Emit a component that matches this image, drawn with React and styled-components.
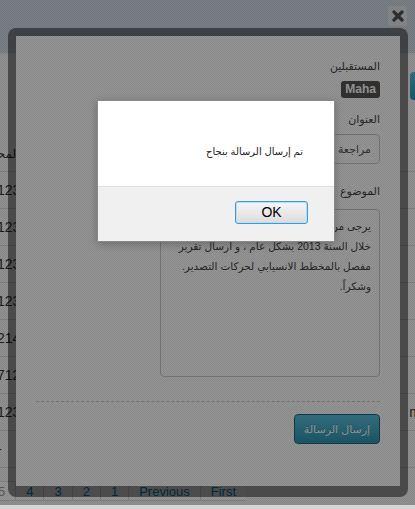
import React from 'react';
import styled, { createGlobalStyle } from 'styled-components';

const GlobalStyle = createGlobalStyle`
  html, body {
    margin: 0;
    padding: 0;
  }
  body {
    width: 415px;
    height: 509px;
    overflow: hidden;
    background: #d6d6d6;
    font-family: "Liberation Sans", "DejaVu Sans", sans-serif;
  }
`;

const Screen = styled.div`
  position: relative;
  width: 415px;
  height: 509px;
  overflow: hidden;
`;

/* ---------- page behind the dialogs ---------- */

const Page = styled.div`
  display: flex;
  flex-direction: column;
  height: 505px;
  background: #fafafa;
`;

const TopBar = styled.div`
  height: 53px;
  background: #d0dce6;
  border-bottom: 2px solid #eef2f5;
`;

const Toolbar = styled.div`
  display: flex;
  justify-content: flex-end;
  height: 66px;
  padding-top: 17px;
`;

const ToolButton = styled.div`
  width: 80px;
  height: 28px;
  margin-right: -75px;
  border-radius: 4px;
  background: linear-gradient(#5bc0de, #2f96b4);
`;

const Table = styled.div`
  display: flex;
  flex-direction: column;
`;

const Row = styled.div`
  display: flex;
  justify-content: space-between;
  align-items: ${(p) => (p.$head ? 'flex-end' : 'center')};
  height: ${(p) => (p.$head ? '34px' : '37px')};
  padding-bottom: ${(p) => (p.$head ? '10px' : '0')};
  box-sizing: border-box;
  border-bottom: 1px solid #dddddd;
  font-size: 14px;
  color: #333;
`;

const FirstCell = styled.span`
  margin-left: ${(p) => (p.$head ? '-24px' : '-3px')};
  direction: ${(p) => (p.$head ? 'rtl' : 'ltr')};
  font-size: ${(p) => (p.$head ? '12px' : '14px')};
`;

const LastCell = styled.span`
  margin-right: -6px;
`;

const Pagination = styled.div`
  display: flex;
  margin-top: 13px;
  margin-left: -13px;
  height: 20px;
`;

const PageLink = styled.div`
  display: flex;
  align-items: center;
  padding: 0 10px;
  border: 1px solid #dddddd;
  border-right: none;
  font-size: 13px;
  color: ${(p) => (p.$muted ? '#999999' : '#0088cc')};
  background: #fff;
`;

/* ---------- bootstrap-like modal ---------- */

const Modal = styled.div`
  position: absolute;
  left: 8px;
  top: 28px;
  width: 400px;
  height: 469px;
  box-sizing: border-box;
  border: 8px solid rgba(0, 0, 0, 0.47);
  border-bottom-width: 11px;
  border-radius: 8px;
  background: #fff;
  background-clip: padding-box;
`;

const ModalBody = styled.div`
  display: flex;
  flex-direction: column;
  align-items: flex-start;
  direction: rtl;
  padding: 21px 20px 0;
`;

const Label = styled.div`
  font-size: 11px;
  line-height: 18px;
  color: #444;
  margin-top: ${(p) => p.$top || 0}px;
`;

const Badge = styled.span`
  margin-top: 6px;
  padding: 0 4px;
  height: 17px;
  line-height: 17px;
  border-radius: 3px;
  background: #555;
  color: #fff;
  font-weight: bold;
  font-size: 12px;
  direction: ltr;
`;

const Input = styled.div`
  margin-top: 6px;
  width: 220px;
  height: 30px;
  box-sizing: border-box;
  padding: 0 8px;
  border: 1px solid #cccccc;
  border-radius: 4px;
  font-size: 11px;
  line-height: 28px;
  color: #555;
  white-space: nowrap;
  overflow: hidden;
`;

const TextArea = styled.div`
  margin-top: 9px;
  width: 220px;
  height: 168px;
  box-sizing: border-box;
  padding: 6px 8px;
  border: 1px solid #cccccc;
  border-radius: 4px;
  font-size: 10.5px;
  line-height: 20px;
  color: #444;
  overflow: hidden;
`;

const Line = styled.div`
  white-space: nowrap;
`;

const Divider = styled.div`
  align-self: stretch;
  margin-top: 24px;
  border-top: 1px dashed #cccccc;
`;

const SendButton = styled.div`
  margin-top: 12px;
  width: 86px;
  height: 30px;
  box-sizing: border-box;
  border: 1px solid #1f6377;
  border-radius: 4px;
  background: linear-gradient(#5bc0de, #2f96b4);
  color: #fff;
  font-size: 11px;
  line-height: 28px;
  text-align: center;
  text-shadow: 0 -1px 0 rgba(0, 0, 0, 0.25);
`;

const CloseButton = styled.div`
  position: absolute;
  left: 388px;
  top: 6px;
  width: 19px;
  height: 20px;
  display: flex;
  align-items: center;
  justify-content: center;
  border-radius: 3px;
  background: #e4ebf1;
`;

/* ---------- dimming and alert box ---------- */

const Overlay = styled.div`
  position: absolute;
  left: 0;
  top: 0;
  width: 415px;
  height: 505px;
  background: repeating-conic-gradient(
      rgba(0, 0, 0, 0.42) 0 25%,
      rgba(0, 0, 0, 0.46) 0 50%
    )
    0 0 / 2px 2px;
`;

const Alert = styled.div`
  position: absolute;
  left: 97px;
  top: 100px;
  width: 238px;
  height: 142px;
  box-sizing: border-box;
  display: flex;
  flex-direction: column;
  border: 1px solid #8a8a8a;
  background: #fff;
  box-shadow: 0 2px 8px rgba(0, 0, 0, 0.25);
`;

const AlertMessage = styled.div`
  height: 86px;
  box-sizing: border-box;
  padding: 43px 31px 0 0;
  border-bottom: 1px solid #dfdfdf;
  direction: rtl;
  font-size: 10px;
  line-height: 16px;
  color: #222;
`;

const AlertFooter = styled.div`
  flex: 1;
  display: flex;
  justify-content: flex-end;
  align-items: flex-start;
  padding: 14px 26px 0 0;
  background: #f0f0f0;
`;

const OkButton = styled.div`
  width: 73px;
  height: 23px;
  box-sizing: border-box;
  border: 1px solid #3c9ad6;
  border-radius: 3px;
  background: linear-gradient(#f6f6f6, #dcdcdc);
  box-shadow: inset 0 0 0 1px #b5def7;
  font-size: 14px;
  line-height: 21px;
  text-align: center;
  color: #000;
`;

const rows = ['12345678', '12345678', '12345678', '12345678', '21456789', '71234567', '12345678', '-'];
const pages = ['5', '4', '3', '2', '1', 'Previous', 'First'];

const App = () => {
  return (
    <Screen>
      <GlobalStyle />
      <Page>
        <TopBar />
        <Toolbar>
          <ToolButton />
        </Toolbar>
        <Table>
          <Row $head>
            <FirstCell $head>المحمول</FirstCell>
            <LastCell />
          </Row>
          {rows.map((r, i) => (
            <Row key={i}>
              <FirstCell>{r}</FirstCell>
              <LastCell>{i === 6 ? 'm' : ''}</LastCell>
            </Row>
          ))}
        </Table>
        <Pagination>
          {pages.map((t) => (
            <PageLink key={t} $muted={t === '5'}>{t}</PageLink>
          ))}
        </Pagination>
      </Page>

      <Modal>
        <ModalBody>
          <Label $top={0}>المستقبلين</Label>
          <Badge>Maha</Badge>
          <Label $top={12}>العنوان</Label>
          <Input>مراجعة حركات التصدير لعام 2013</Input>
          <Label $top={18}>الموضوع</Label>
          <TextArea>
            <Line>يرجى مراجعة حركات الاستيراد والتصدير</Line>
            <Line>خلال السنة 2013 بشكل عام ، و ارسال تقرير</Line>
            <Line>مفصل بالمخطط الانسيابي لحركات التصدير.</Line>
            <Line>وشكراً.</Line>
          </TextArea>
          <Divider />
          <SendButton>إرسال الرسالة</SendButton>
        </ModalBody>
      </Modal>

      <CloseButton>
        <svg width="12" height="12" viewBox="0 0 12 12">
          <path d="M2 2 L10 10 M10 2 L2 10" stroke="#4f4f4f" strokeWidth="3.2" strokeLinecap="round" />
        </svg>
      </CloseButton>

      <Overlay />

      <Alert>
        <AlertMessage>تم إرسال الرسالة بنجاح</AlertMessage>
        <AlertFooter>
          <OkButton>OK</OkButton>
        </AlertFooter>
      </Alert>
    </Screen>
  );
};

export default App;
